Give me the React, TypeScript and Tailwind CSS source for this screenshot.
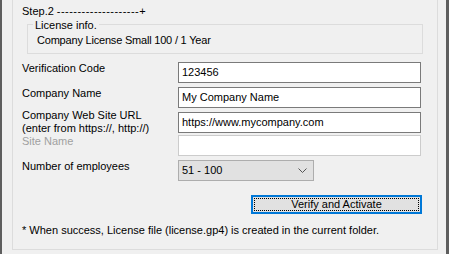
const font = { fontFamily: '"Liberation Sans", Arial, sans-serif' }

const Field = ({ value, disabled }: { value: string; disabled?: boolean }) => (
  <div
    className={`w-[243px] h-[21px] border bg-white pl-[3px] text-[11px] leading-[19px] text-black ${
      disabled ? 'border-[#cccccc]' : 'border-[#7a7a7a]'
    }`}
  >
    {value}
  </div>
)

export default function App() {
  return (
    <div
      className="w-[449px] h-[254px] bg-[#f0f0f0] flex border-l-2 border-r-[3px] border-[#5e5e5e] text-[11px] leading-[13px] text-black"
      style={font}
    >
      <div className="ml-[10px] w-[426px] h-[250px] border-l border-r border-b border-[#dcdcdc] pl-[9px] flex flex-col">
        <div className="mt-[5px] h-[13px]">
          Step.2 <span className="tracking-[0.45px]">--------------------</span>+
        </div>

        <div className="mt-[6px] ml-[5px] w-[396px] h-[30px] border border-[#dcdcdc]">
          <div className="-mt-[6px] ml-[5px] h-[13px] w-fit bg-[#f0f0f0] px-[2px]">License info.</div>
          <div className="mt-[2px] pl-[9px] tracking-[-0.2px]">Company License Small 100 / 1 Year</div>
        </div>

        <div className="mt-[8px] h-[21px] flex items-start">
          <div className="w-[156px]">Verification Code</div>
          <Field value="123456" />
        </div>
        <div className="mt-[4px] h-[21px] flex items-start">
          <div className="w-[156px]">Company Name</div>
          <Field value="My Company Name" />
        </div>
        <div className="mt-[4px] h-[21px] flex items-start">
          <div className="w-[156px] -mt-[3px]">
            Company Web Site URL
            <br />
            (enter from https://, http://)
          </div>
          <Field value="https://www.mycompany.com" />
        </div>
        <div className="mt-[2px] h-[21px] flex items-start">
          <div className="w-[156px] text-[#a0a0a0]">Site Name</div>
          <Field value="" disabled />
        </div>
        <div className="mt-[4px] h-[21px] flex items-start">
          <div className="w-[156px]">Number of employees</div>
          <div className="w-[136px] h-[21px] border border-[#adadad] bg-[#e1e1e1] pl-[3px] pr-[6px] flex items-center justify-between">
            <span>51 - 100</span>
            <svg width="9" height="5" viewBox="0 0 9 5" className="text-[#555]">
              <path d="M0.5 0.5 L4.5 4.5 L8.5 0.5" fill="none" stroke="currentColor" strokeWidth="1" />
            </svg>
          </div>
        </div>

        <div className="mt-[14px] ml-[229px] w-[171px] h-[19px] border-2 border-[#0078d7] bg-[#e1e1e1] p-[1px]">
          <div className="h-full border border-dotted border-black flex items-center justify-center leading-[11px]">
            Verify and Activate
          </div>
        </div>

        <div className="mt-[10px]">* When success, License file (license.gp4) is created in the current folder.</div>
      </div>
    </div>
  )
}
